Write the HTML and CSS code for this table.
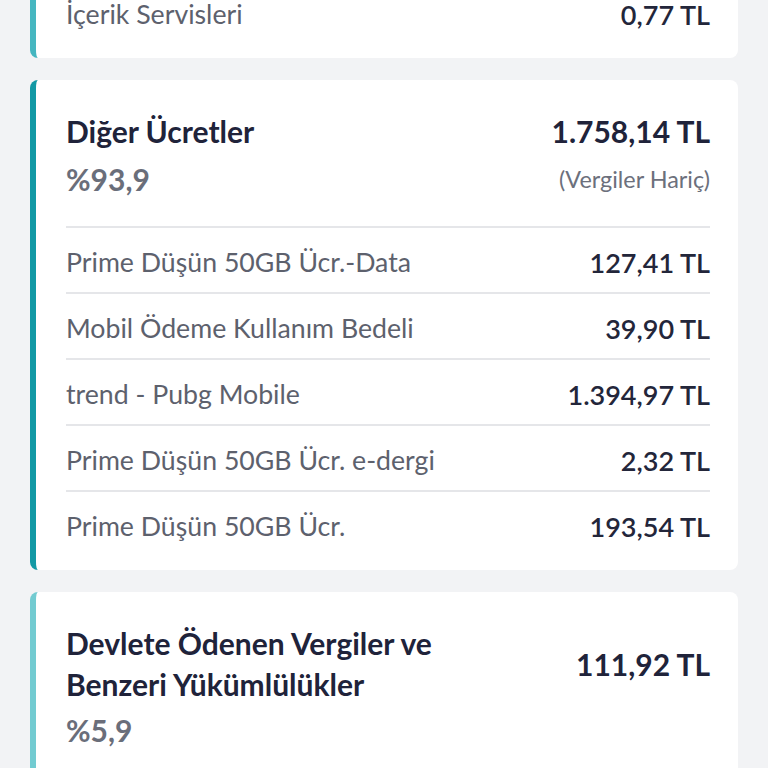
FILE: index.html
```html
<!DOCTYPE html>
<html lang="tr">
<head>
<meta charset="utf-8">
<link rel="stylesheet" href="styles.css">
</head>
<body>
<div class="page">
  <section class="card card-a card-cut">
    <div class="row"><span class="label">İçerik Servisleri</span><span class="amt">0,77 TL</span></div>
  </section>

  <section class="card card-b">
    <div class="head">
      <div class="title">Diğer Ücretler</div>
      <div class="total">1.758,14 TL</div>
    </div>
    <div class="sub">
      <div class="pct">%93,9</div>
      <div class="note">(Vergiler Hariç)</div>
    </div>
    <div class="rows">
      <div class="row"><span class="label">Prime Düşün 50GB Ücr.-Data</span><span class="amt">127,41 TL</span></div>
      <div class="row"><span class="label">Mobil Ödeme Kullanım Bedeli</span><span class="amt">39,90 TL</span></div>
      <div class="row"><span class="label">trend - Pubg Mobile</span><span class="amt">1.394,97 TL</span></div>
      <div class="row"><span class="label">Prime Düşün 50GB Ücr. e-dergi</span><span class="amt">2,32 TL</span></div>
      <div class="row"><span class="label">Prime Düşün 50GB Ücr.</span><span class="amt">193,54 TL</span></div>
    </div>
  </section>

  <section class="card card-c">
    <div class="head">
      <div class="title title-wrap">Devlete Ödenen Vergiler ve Benzeri Yükümlülükler</div>
      <div class="total">111,92 TL</div>
    </div>
    <div class="sub sub-tight">
      <div class="pct">%5,9</div>
    </div>
  </section>
</div>
</body>
</html>
```
FILE: styles.css
```css
* { box-sizing: border-box; }
html, body { margin: 0; padding: 0; }
body {
  background: #f2f3f5;
  font-family: Lato, "Noto Sans", sans-serif;
  width: 768px;
  height: 768px;
  overflow: hidden;
}
.page {
  display: flex;
  flex-direction: column;
  gap: 22px;
  padding: 0 30px;
}
.card {
  background: #ffffff;
  border-left: 6px solid #1299a5;
  border-radius: 8px;
  padding: 31px 28px 14px 30px;
}
.card-a { border-left-color: #45b6c0; }
.card-b { border-left-color: #1299a5; }
.card-c { border-left-color: #72cbd1; min-height: 300px; }
.card-cut {
  margin-top: -22px;
  padding-top: 0;
  border-top-left-radius: 0;
  border-top-right-radius: 0;
}
.head {
  display: flex;
  justify-content: space-between;
  align-items: center;
}
.title {
  font-size: 30px;
  font-weight: 700;
  color: #20233a;
  line-height: 40px;
}
.title-wrap {
  max-width: 400px;
  line-height: 41px;
}
.total {
  font-size: 30px;
  font-weight: 700;
  color: #20233a;
  line-height: 40px;
  white-space: nowrap;
}
.sub {
  display: flex;
  justify-content: space-between;
  align-items: center;
  margin-top: 8px;
  margin-bottom: 27px;
}
.sub-tight { margin-top: 5px; }
.pct {
  font-size: 30px;
  font-weight: 700;
  color: #6a6e7a;
  line-height: 40px;
}
.note {
  font-size: 23.4px;
  color: #6c707c;
  line-height: 40px;
}
.row {
  display: flex;
  justify-content: space-between;
  align-items: center;
  height: 66px;
  border-top: 2px solid #e5e6e9;
  padding-top: 4px;
}
.label {
  font-size: 26.7px;
  color: #5d616d;
}
.amt {
  font-size: 27px;
  font-weight: 600;
  color: #23263a;
}
```
